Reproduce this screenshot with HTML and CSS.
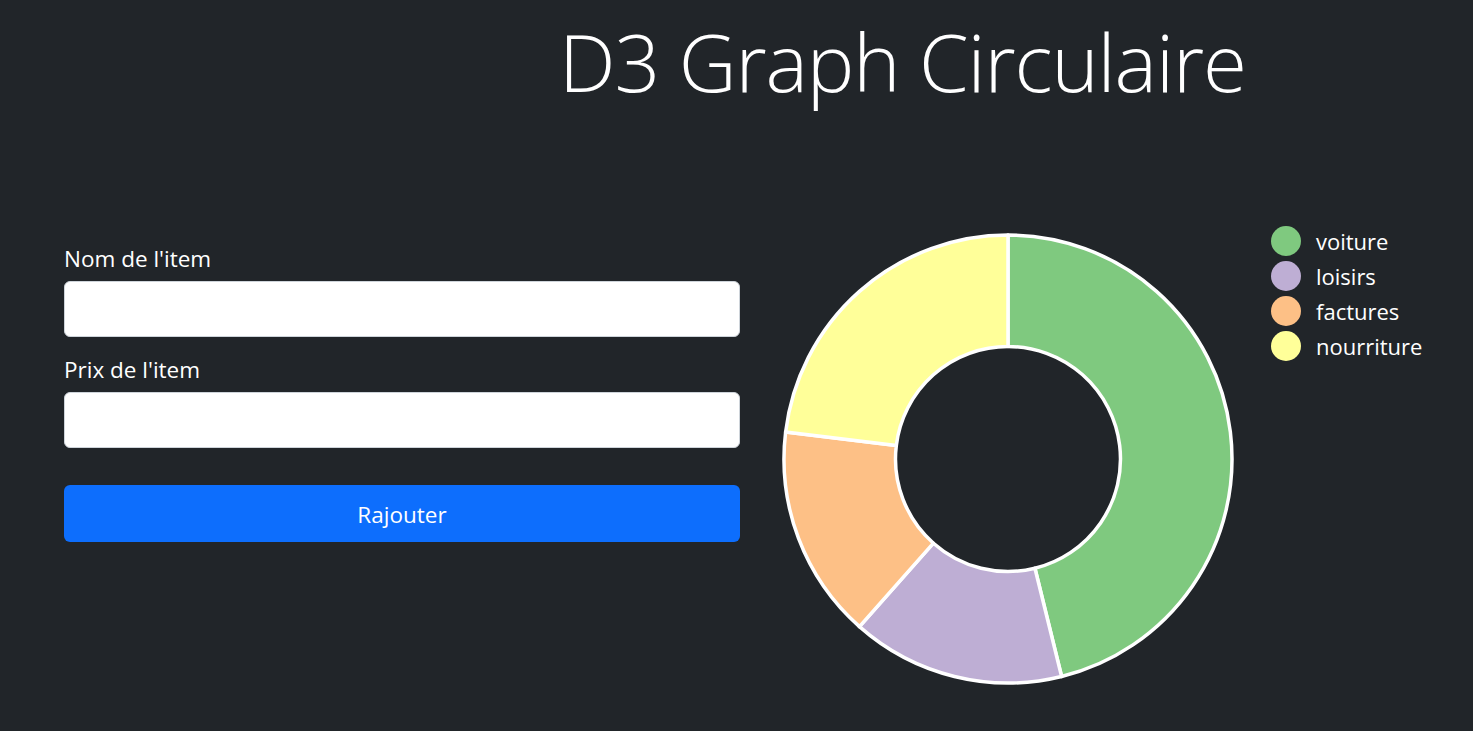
FILE: index.html
```html
<!DOCTYPE html>
<html lang="fr">
<head>
<meta charset="utf-8">
<title>D3 Graph Circulaire</title>
<link rel="stylesheet" href="styles.css">
</head>
<body>
<header class="header">
  <h1 class="title">D3 Graph Circulaire</h1>
</header>
<main class="main">
  <form class="form">
    <div class="group">
      <label class="label" for="nom">Nom de l'item</label>
      <input class="input" id="nom" type="text">
    </div>
    <div class="group group-2">
      <label class="label" for="prix">Prix de l'item</label>
      <input class="input" id="prix" type="text">
    </div>
    <button class="btn" type="button">Rajouter</button>
  </form>
  <svg class="chart" width="460" height="460" viewBox="0 0 460 460">
    <g transform="translate(230,230)" stroke="#fff" stroke-width="3.5" stroke-linejoin="round">
      <path fill="#7fc97f" d="M0,-224 A224,224 0 0 1 53.61,217.49 L26.92,109.23 A112.5,112.5 0 0 0 0,-112.5 Z"/>
      <path fill="#beaed4" d="M53.61,217.49 A224,224 0 0 1 -148.54,167.67 L-74.60,84.21 A112.5,112.5 0 0 0 26.92,109.23 Z"/>
      <path fill="#fdc086" d="M-148.54,167.67 A224,224 0 0 1 -222.37,-27.00 L-111.68,-13.56 A112.5,112.5 0 0 0 -74.60,84.21 Z"/>
      <path fill="#ffff99" d="M-222.37,-27.00 A224,224 0 0 1 0,-224 L0,-112.5 A112.5,112.5 0 0 0 -111.68,-13.56 Z"/>
    </g>
  </svg>
  <ul class="legend">
    <li class="legend-item"><span class="dot dot-green"></span>voiture</li>
    <li class="legend-item"><span class="dot dot-purple"></span>loisirs</li>
    <li class="legend-item"><span class="dot dot-orange"></span>factures</li>
    <li class="legend-item"><span class="dot dot-yellow"></span>nourriture</li>
  </ul>
</main>
</body>
</html>
```

FILE: styles.css
```css
* { box-sizing: border-box; }
html, body { margin: 0; padding: 0; }
body {
  background: #212529;
  color: #fff;
  font-family: "Open Sans", "Noto Sans", sans-serif;
  width: 1473px;
  height: 731px;
  overflow: hidden;
}
.header {
  padding-top: 13px;
  padding-left: 559px;
}
.title {
  margin: 0;
  font-size: 80px;
  font-weight: 300;
  line-height: 96px;
  letter-spacing: -1.1px;
  white-space: nowrap;
}
.main {
  display: flex;
  align-items: flex-start;
  margin-top: 120px;
  padding-left: 64px;
}
.form {
  width: 676px;
  padding-top: 15px;
  margin: 0;
  display: flex;
  flex-direction: column;
}
.group { display: flex; flex-direction: column; }
.group-2 { margin-top: 18px; }
.label {
  font-size: 22.5px;
  line-height: 30px;
  margin-bottom: 7px;
}
.input {
  height: 56px;
  border: 1px solid #ced4da;
  border-radius: 6px;
  background: #fff;
  font: inherit;
  padding: 0 16px;
}
.btn {
  margin-top: 37px;
  height: 57px;
  padding-top: 3px;
  border: none;
  border-radius: 6px;
  background: #0d6efd;
  color: #fff;
  font-family: inherit;
  font-size: 22.5px;
}
.chart {
  display: block;
  margin-left: 38px;
  flex: none;
}
.legend {
  list-style: none;
  margin: 0 0 0 33px;
  padding: 0;
}
.legend-item {
  display: flex;
  align-items: center;
  height: 35px;
  font-size: 22px;
  gap: 15px;
}
.legend-item:first-child { margin-top: -6px; }
.dot {
  width: 30px;
  height: 30px;
  border-radius: 50%;
  flex: none;
}
.dot-green { background: #7fc97f; }
.dot-purple { background: #beaed4; }
.dot-orange { background: #fdc086; }
.dot-yellow { background: #ffff99; }
```
